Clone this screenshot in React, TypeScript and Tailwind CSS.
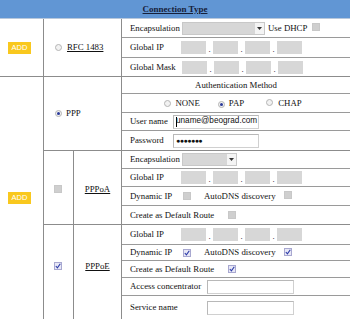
import React from "react";

const Radio = ({ on = false }: { on?: boolean }) => (
  <span className="inline-flex items-center justify-center w-[7px] h-[7px] rounded-full border border-[#b4b4b4] bg-[#f2f2f2] shrink-0">
    {on && <span className="w-[3px] h-[3px] rounded-full bg-[#2a3a9a]" />}
  </span>
);

const Check = ({ on = false }: { on?: boolean }) =>
  on ? (
    <span className="inline-flex items-center justify-center w-[8px] h-[8px] border border-[#a8a8d0] bg-[#e8e8f6] shrink-0">
      <svg width="6" height="6" viewBox="0 0 6 6">
        <path d="M0.8 3 L2.4 4.8 L5.3 0.8" stroke="#2b3aa8" strokeWidth="1.1" fill="none" />
      </svg>
    </span>
  ) : (
    <span className="inline-block w-[8px] h-[8px] border border-[#c8c8c8] bg-[#cfcfcf] shrink-0" />
  );

const Add = () => (
  <span className="inline-flex items-center justify-center w-[23px] h-[12px] bg-[#f9c81e] text-white text-[7.5px] [font-family:'Liberation_Sans',sans-serif] leading-none">
    ADD
  </span>
);

const IP = () => (
  <div className="flex items-end">
    {[0, 1, 2, 3].map((i) => (
      <React.Fragment key={i}>
        {i > 0 && <span className="w-[7px] text-center leading-none">.</span>}
        <span className="w-[25px] h-[13px] bg-[#d7d7d7]" />
      </React.Fragment>
    ))}
  </div>
);

const Select = ({ w }: { w: string }) => (
  <div className={`flex justify-end h-[13px] bg-[#d7d7d7] border border-[#c8c8c8] ${w}`}>
    <span className="w-[9px] h-full bg-[#f4f4f4] flex items-center justify-center">
      <svg width="5" height="3" viewBox="0 0 5 3">
        <path d="M0 0 H5 L2.5 3 Z" fill="#333" />
      </svg>
    </span>
  </div>
);

const Row = ({
  h,
  last = false,
  children,
  center = false,
}: {
  h: string;
  last?: boolean;
  children?: React.ReactNode;
  center?: boolean;
}) => (
  <div
    className={`flex items-center ${h} ${last ? "" : "border-b border-[#9a9a9a]"} ${
      center ? "justify-center" : "pl-[8px]"
    }`}
  >
    {children}
  </div>
);

const Label = ({ children }: { children: React.ReactNode }) => (
  <span className="w-[52px] shrink-0 whitespace-nowrap">{children}</span>
);

const TextBox = () => (
  <div className="w-[87px] h-[14px] border border-[#d0d0d0] border-t-[#b8b8b8] border-l-[#b8b8b8] bg-white" />
);

export default function App() {
  return (
    <div className="w-[350px] h-[319px] overflow-hidden bg-white text-[#111] text-[8.8px] leading-none [font-family:'Liberation_Serif',serif]">
      <div className="h-[19px] bg-[#6196d4] border-b border-[#b8c8dc] flex items-center justify-center">
        <span className="font-bold underline text-[9px] text-[#16203a]">Connection Type</span>
      </div>

      {/* Block 1 */}
      <div className="flex border-b border-[#8c8c8c]">
        <div className="w-[44px] border-r border-[#8c8c8c] flex items-center pl-[8px]">
          <Add />
        </div>
        <div className="w-[78px] border-r border-[#8c8c8c] flex items-center pl-[11px] gap-[5px]">
          <Radio />
          <span className="underline">RFC 1483</span>
        </div>
        <div className="flex-1 flex flex-col">
          <Row h="h-[19px]">
            <Label>Encapsulation</Label>
            <Select w="w-[83px]" />
            <span className="ml-[3px] whitespace-nowrap">Use DHCP</span>
            <span className="ml-[5px]">
              <Check />
            </span>
          </Row>
          <Row h="h-[20px]">
            <span className="w-[51px] shrink-0">Global IP</span>
            <IP />
          </Row>
          <Row h="h-[18px]" last>
            <Label>Global Mask</Label>
            <IP />
          </Row>
        </div>
      </div>

      {/* Block 2 */}
      <div className="flex border-b border-[#8c8c8c]">
        <div className="w-[44px] border-r border-[#8c8c8c] flex items-center pl-[8px]">
          <Add />
        </div>
        <div className="flex-1 flex flex-col">
          {/* PPP */}
          <div className="flex border-b border-[#8c8c8c]">
            <div className="w-[78px] border-r border-[#8c8c8c] flex items-center pl-[11px] gap-[4px]">
              <Radio on />
              <span>PPP</span>
            </div>
            <div className="flex-1 flex flex-col">
              <Row h="h-[17px]" center>
                <span>Authentication Method</span>
              </Row>
              <Row h="h-[19px]" center>
                <div className="flex items-center pr-[6px]">
                  <Radio />
                  <span className="ml-[4px]">NONE</span>
                  <span className="ml-[18px]">
                    <Radio on />
                  </span>
                  <span className="ml-[4px]">PAP</span>
                  <span className="ml-[22px]">
                    <Radio />
                  </span>
                  <span className="ml-[5px]">CHAP</span>
                </div>
              </Row>
              <Row h="h-[18px]">
                <span className="w-[43px] shrink-0">User name</span>
                <div className="w-[86px] h-[14px] border border-[#d0d0d0] border-t-[#b8b8b8] border-l-[#b8b8b8] bg-white flex items-center pl-[2px] [font-family:'Liberation_Sans',sans-serif] text-[8.2px]">
                  <span className="w-[1px] h-[10px] bg-black mr-[-1px]" />
                  <span>uname@beograd.com</span>
                </div>
              </Row>
              <Row h="h-[19px]" last>
                <span className="w-[43px] shrink-0">Password</span>
                <div className="w-[86px] h-[14px] border border-[#d0d0d0] border-t-[#b8b8b8] border-l-[#b8b8b8] bg-white flex items-center pl-[2px] [font-family:'Liberation_Sans',sans-serif] text-[7px] tracking-[-0.5px]">
                  ●●●●●●●
                </div>
              </Row>
            </div>
          </div>

          {/* PPPoA */}
          <div className="flex border-b border-[#8c8c8c]">
            <div className="w-[30px] border-r border-[#8c8c8c] flex items-center justify-center pr-[1px] pt-[3px]">
              <Check />
            </div>
            <div className="w-[48px] border-r border-[#8c8c8c] flex items-center justify-center pt-[3px]">
              <span className="underline">PPPoA</span>
            </div>
            <div className="flex-1 flex flex-col">
              <Row h="h-[18px]">
                <Label>Encapsulation</Label>
                <Select w="w-[55px]" />
              </Row>
              <Row h="h-[18px]">
                <span className="w-[51px] shrink-0">Global IP</span>
                <IP />
              </Row>
              <Row h="h-[19px]">
                <span className="w-[53px] shrink-0">Dynamic IP</span>
                <Check />
                <span className="ml-[13px]">AutoDNS discovery</span>
                <span className="ml-[8px]">
                  <Check />
                </span>
              </Row>
              <Row h="h-[18px]" last>
                <span className="w-[98px] shrink-0 whitespace-nowrap">Create as Default Route</span>
                <Check />
              </Row>
            </div>
          </div>

          {/* PPPoE */}
          <div className="flex">
            <div className="w-[30px] border-r border-[#8c8c8c] flex items-center justify-center pr-[1px] pb-[12px]">
              <Check on />
            </div>
            <div className="w-[48px] border-r border-[#8c8c8c] flex items-center justify-center pb-[12px]">
              <span className="underline">PPPoE</span>
            </div>
            <div className="flex-1 flex flex-col">
              <Row h="h-[20px]">
                <span className="w-[51px] shrink-0">Global IP</span>
                <IP />
              </Row>
              <Row h="h-[16px]">
                <span className="w-[53px] shrink-0">Dynamic IP</span>
                <Check on />
                <span className="ml-[13px]">AutoDNS discovery</span>
                <span className="ml-[8px]">
                  <Check on />
                </span>
              </Row>
              <Row h="h-[17px]">
                <span className="w-[98px] shrink-0 whitespace-nowrap">Create as Default Route</span>
                <Check on />
              </Row>
              <Row h="h-[18px]">
                <span className="w-[77px] shrink-0 whitespace-nowrap">Access concentrator</span>
                <TextBox />
              </Row>
              <Row h="h-[23px]" last>
                <span className="w-[77px] shrink-0 whitespace-nowrap">Service name</span>
                <TextBox />
              </Row>
            </div>
          </div>
        </div>
      </div>
    </div>
  );
}
